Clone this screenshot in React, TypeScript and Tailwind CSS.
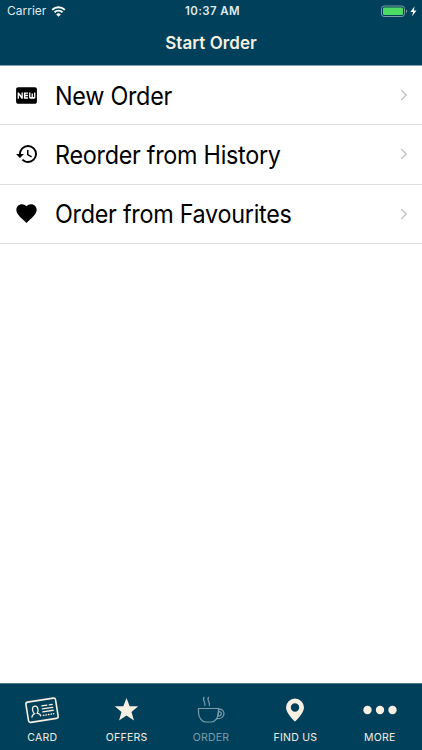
import type { ReactNode } from "react";
import { MdFiberNew, MdHistory } from "react-icons/md";
import { IoMdHeart } from "react-icons/io";

function StatusBar() {
  return (
    <div className="flex h-[22px] items-center pl-[7px] pr-1 text-[12px] leading-none text-[#dfeaf0]">
      <div className="flex flex-1 items-center gap-[4px]">
        <span className="w-[40px] whitespace-nowrap">Carrier</span>
        <svg width="15" height="11" viewBox="0 0 14 11" fill="none" stroke="#fff">
          <path d="M0.7 3.900a9 9 0 0 1 12.600 0" strokeWidth="2" />
          <path d="M3 6.300a5.700 5.700 0 0 1 8 0" strokeWidth="1.900" />
          <path d="M7 10.800L4.700 8.400a3.300 3.300 0 0 1 4.600 0z" fill="#fff" stroke="none" />
        </svg>
      </div>
      <span className="whitespace-nowrap pt-[2px] text-[11.5px] font-semibold tracking-[0.4px]">10:37 AM</span>
      <div className="flex flex-1 items-center justify-end">
        <svg width="38" height="13" viewBox="0 0 38 13">
          <rect x="1.500" y="1" width="23" height="10.500" rx="2.600" fill="none" stroke="#7d9dab" />
          <rect x="3" y="2.500" width="20" height="7.500" rx="1.200" fill="#4cd964" />
          <path d="M26 4.600c1.600.5 1.600 2.800 0 3.300z" fill="#7d9dab" />
          <path d="M34.600 1.200L30.400 7h2.700l-1 4.300L36.500 5.500h-2.800z" fill="#fff" />
        </svg>
      </div>
    </div>
  );
}

function Row({ icon, label }: { icon: ReactNode; label: string }) {
  return (
    <div className="flex flex-1 items-center border-b border-[#dedede] pl-[14px] pr-[14px]">
      <div className="flex w-[25px] justify-center">{icon}</div>
      <div className="ml-4 flex-1 pt-px">
        <span className="inline-block origin-left scale-x-[0.935] whitespace-nowrap text-[25px] leading-8 tracking-[-0.3px] text-black">
          {label}
        </span>
      </div>
      <svg width="8" height="12" viewBox="0 0 8 12" fill="none" stroke="#c7c7cc" strokeWidth="1.600">
        <path d="M1.200 1l5 5-5 5" />
      </svg>
    </div>
  );
}

function Tab({ icon, label, dim }: { icon: ReactNode; label: string; dim?: boolean }) {
  return (
    <div className={dim ? "flex flex-1 flex-col items-center text-[#7c9caa]" : "flex flex-1 flex-col items-center text-[#f6efe2]"}>
      <div className="flex h-[47px] items-center justify-center pt-[4px]">{icon}</div>
      <span className="whitespace-nowrap text-[10.5px] leading-[13px] tracking-[0.25px]">{label}</span>
    </div>
  );
}

function CardIcon() {
  return (
    <svg width="36" height="30" viewBox="0 0 36 30" fill="none" stroke="currentColor" strokeWidth="1.600" strokeLinecap="round">
      <g transform="rotate(-9 18 15)">
        <rect x="3" y="5" width="30" height="20.500" rx="2" />
        <path d="M7 20.500c.2-2.200 1.300-2.300 3-3-1.900-1.900-2.100-7.400 1.400-7.400s3.300 5.500 1.400 7.400c1.700.7 2.800.8 3 3" strokeWidth="1.300" />
        <path d="M18.500 11h5M26 11h3M18.500 14h10.500M18.500 17h10.500" strokeWidth="1.300" />
        <path d="M18.500 20.500h10.500" strokeWidth="1.400" strokeDasharray="0.500 2.100" />
      </g>
    </svg>
  );
}

function CupIcon() {
  return (
    <svg width="28" height="28" viewBox="0 0 28 28" fill="none" stroke="currentColor" strokeWidth="1.200">
      <path d="M7.300 1c-3 3 2.200 5.500.4 9M11.800 1c-3 3 2.200 5.500.4 9" />
      <path d="M1.500 12.500h20v4c0 5-3.500 9.500-7 9.500H8.500c-3.500 0-7-4.500-7-9.500z" />
      <path d="M21.500 13.200c7.300-.8 7.900 10.200-1.900 9.400" />
      <path d="M21.500 15.600c3.900-.4 3.900 4.600-.9 4.600z" />
    </svg>
  );
}

function App() {
  return (
    <div className="flex h-[750px] w-[422px] flex-col overflow-hidden bg-white font-['Inter',sans-serif]">
      {/* Header */}
      <div className="h-[66px] border-b border-[#7f9fb2] bg-[#00405a]">
        <StatusBar />
        <div className="flex h-[43px] items-center justify-center text-[17px] font-semibold text-[#f6efe2]">
          <span className="tracking-[0.05px]">Start Order</span>
        </div>
      </div>

      {/* Order options */}
      <div className="flex h-[178px] flex-col">
        <Row icon={<MdFiberNew size={25} />} label="New Order" />
        <Row icon={<MdHistory size={24} />} label="Reorder from History" />
        <Row icon={<IoMdHeart size={25} />} label="Order from Favourites" />
      </div>

      {/* Tab bar */}
      <div className="mt-auto flex h-[67px] border-t border-[#4f7688] bg-[#00405a]">
        <Tab icon={<CardIcon />} label="CARD" />
        <Tab
          icon={
            <svg width="26" height="26" viewBox="0 0 26 26" fill="currentColor">
              <path d="M12.500 1l3.200 8.200h8.500l-6.700 5.700 2.500 8.600-7.500-4.900-7.500 4.900 2.500-8.600L.8 9.200h8.500z" />
            </svg>
          }
          label="OFFERS"
        />
        <Tab icon={<CupIcon />} label="ORDER" dim />
        <Tab
          icon={
            <svg width="20" height="24" viewBox="0 0 20 24" fill="currentColor" fillRule="evenodd">
              <path d="M10 .5a9 9 0 0 0-9 9C1 15.500 10 23.500 10 23.500s9-8 9-14a9 9 0 0 0-9-9zm0 4.800a4.200 4.200 0 1 1 0 8.400 4.200 4.200 0 0 1 0-8.400z" />
            </svg>
          }
          label="FIND US"
        />
        <Tab
          icon={
            <svg width="34" height="10" viewBox="0 0 34 10" fill="currentColor">
              <circle cx="4.500" cy="5" r="4.200" />
              <circle cx="17" cy="5" r="4.200" />
              <circle cx="29.500" cy="5" r="4.200" />
            </svg>
          }
          label="MORE"
        />
      </div>
    </div>
  );
}

export default App;
